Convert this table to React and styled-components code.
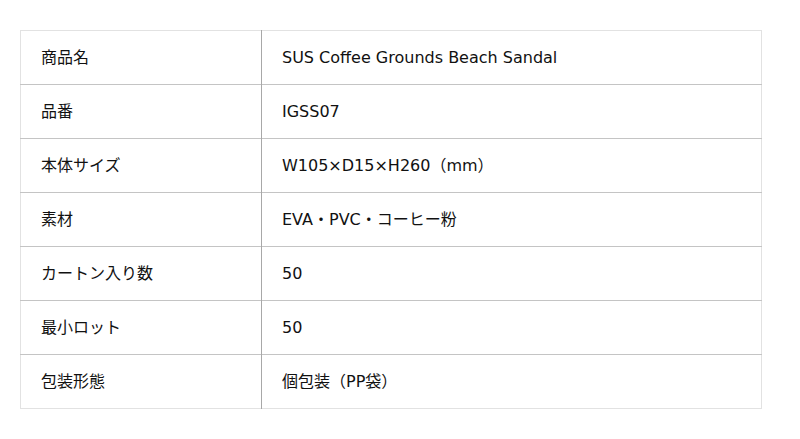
import React from 'react';
import styled, { createGlobalStyle } from 'styled-components';

const GlobalStyle = createGlobalStyle`
  body {
    margin: 0;
    background: #fff;
    font-family: "DejaVu Sans", "Noto Sans CJK JP", sans-serif;
    color: #111;
  }
`;

const Page = styled.div`
  padding: 30px 38px 0 20px;
`;

const SpecTable = styled.table`
  width: 742px;
  table-layout: fixed;
  border-collapse: collapse;
  border: 1px solid #e2e2e2;
  font-family: "DejaVu Sans", "Noto Sans CJK JP", sans-serif;
  font-size: 16px;
  line-height: 20px;
  color: #111;
`;

const Row = styled.tr`
  border-bottom: 1px solid #c4c4c4;
  &:last-child {
    border-bottom: 1px solid #e2e2e2;
  }
`;

const Label = styled.th`
  width: 220px;
  height: 53px;
  padding: 0 0 0 20px;
  text-align: left;
  font-weight: normal;
  border-right: 1px solid #a8a8a8;
  vertical-align: middle;
`;

const Value = styled.td`
  padding: 0 0 0 20px;
  vertical-align: middle;
`;

const specs = [
  ['商品名', 'SUS Coffee Grounds Beach Sandal'],
  ['品番', 'IGSS07'],
  ['本体サイズ', 'W105×D15×H260（mm）'],
  ['素材', 'EVA・PVC・コーヒー粉'],
  ['カートン入り数', '50'],
  ['最小ロット', '50'],
  ['包装形態', '個包装（PP袋）'],
];

const App = () => {
  return (
    <Page>
      <GlobalStyle />
      <SpecTable>
        <tbody>
          {specs.map(([label, value]) => (
            <Row key={label}>
              <Label>{label}</Label>
              <Value>{value}</Value>
            </Row>
          ))}
        </tbody>
      </SpecTable>
    </Page>
  );
};

export default App;
